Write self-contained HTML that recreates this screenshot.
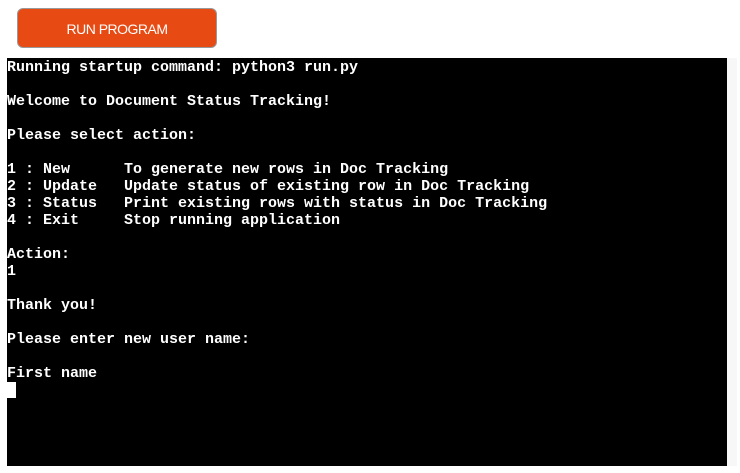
<!DOCTYPE html>
<html><head><style>
html,body{margin:0;padding:0;background:#fff;width:740px;height:473px;overflow:hidden}
.btn{position:absolute;left:17px;top:8px;width:198px;height:38px;background:#e84a13;border:1px solid #999;border-radius:6px;color:#fff;font:14px "Liberation Sans",sans-serif;letter-spacing:-0.5px;text-align:center;line-height:40px;box-sizing:content-box}
.term{position:absolute;left:7px;top:58px;width:720px;height:408px;background:#000}
.sb{position:absolute;left:727px;top:58px;width:10px;height:408px;background:#f7f7f7}
pre{margin:0;position:absolute;left:7px;top:59px;color:#fff;font:bold 15px/17px "Liberation Mono",monospace}
.cur{display:inline-block;width:9px;height:16px;background:#fff;vertical-align:top}
</style></head><body>
<div class="btn">RUN PROGRAM</div>
<div class="term"></div><div class="sb"></div>
<pre>Running startup command: python3 run.py

Welcome to Document Status Tracking!

Please select action:

1 : New      To generate new rows in Doc Tracking
2 : Update   Update status of existing row in Doc Tracking
3 : Status   Print existing rows with status in Doc Tracking
4 : Exit     Stop running application

Action:
1

Thank you!

Please enter new user name:

First name
<span class="cur"></span></pre>
</body></html>
